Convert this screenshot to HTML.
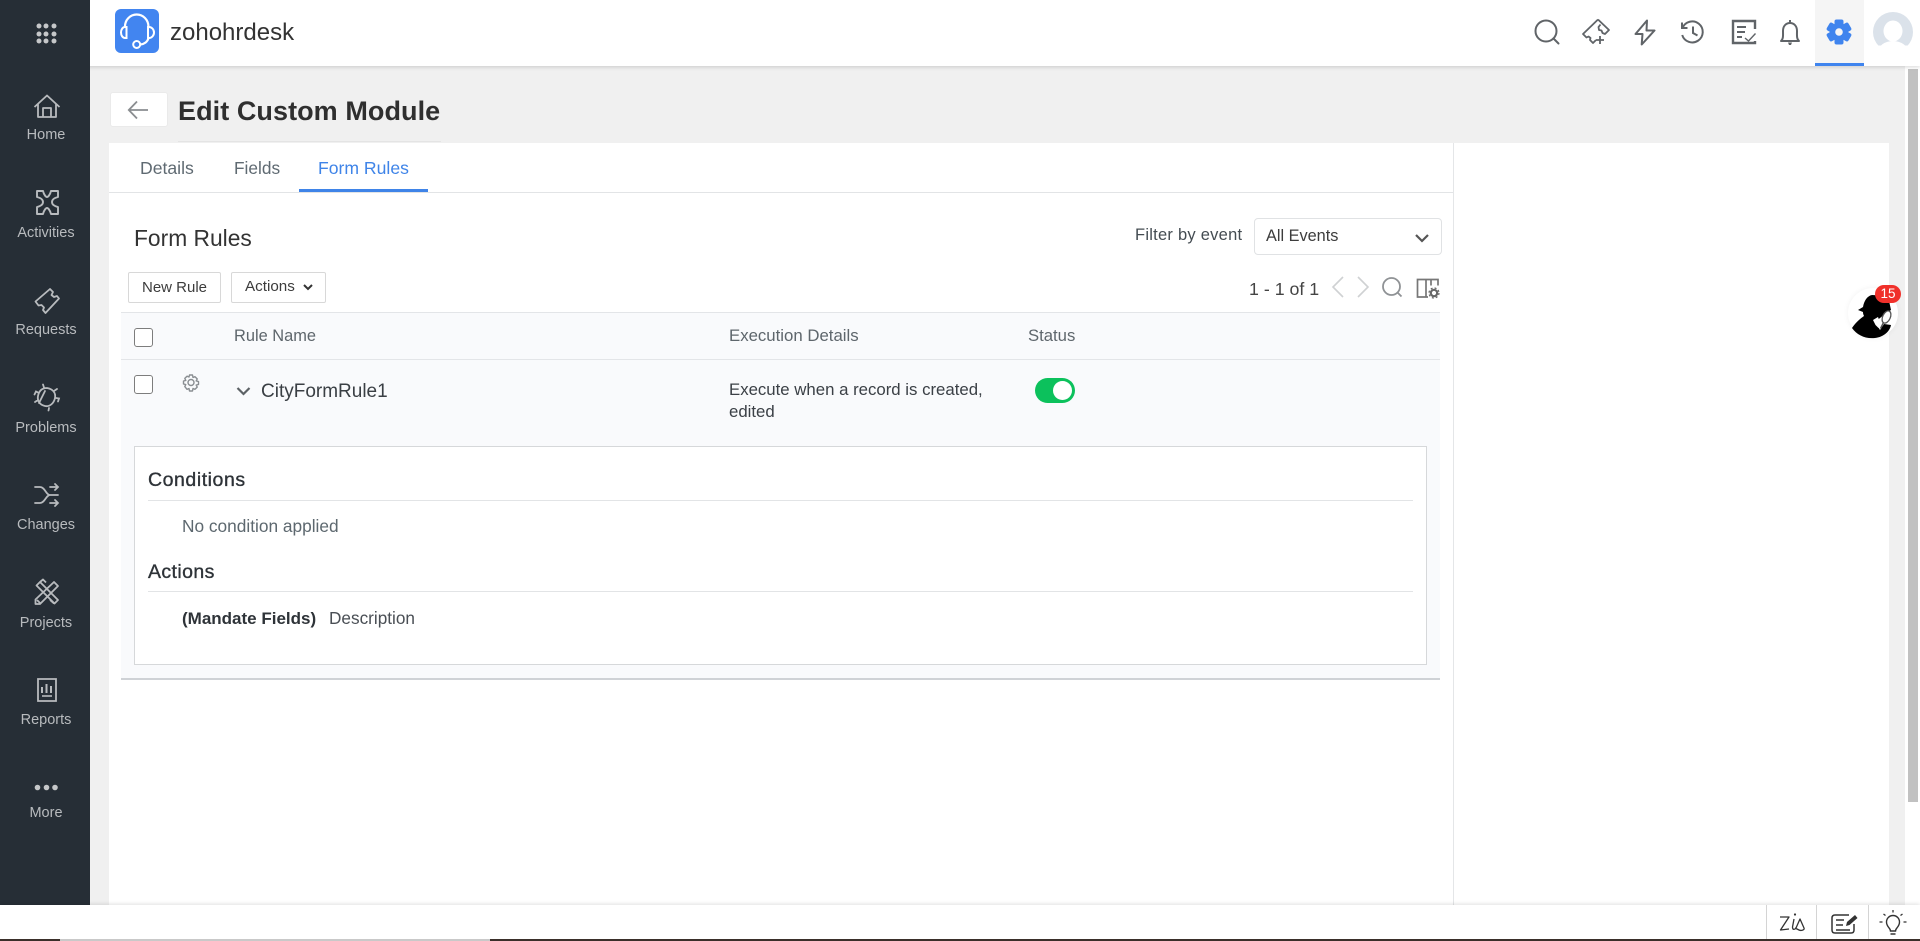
<!DOCTYPE html>
<html><head><meta charset="utf-8"><title>Edit Custom Module</title>
<style>
html,body{margin:0;padding:0;width:1920px;height:941px;overflow:hidden;background:#f0f0f0;font-family:"Liberation Sans",sans-serif;color:#333}
div,span,svg{position:absolute}
.t{white-space:nowrap;line-height:20px;height:20px}
.side{width:92px;left:0;text-align:center;color:#b8bbbe;font-size:14.5px;line-height:20px;height:20px}
svg{overflow:visible;fill:none}
.ic{stroke:#b8bbbe;stroke-width:1.6}
.top{stroke:#606468;stroke-width:2}
</style></head><body>

<!-- main white areas -->
<div style="left:109px;top:143px;width:1780px;height:762px;background:#fff"></div>
<div style="left:1453px;top:143px;width:1px;height:762px;background:#e4e6e8"></div>
<div style="left:109px;top:192px;width:1344px;height:1px;background:#e2e4e6"></div>
<div style="left:178px;top:141px;width:263px;height:1px;background:#e4e4e4"></div>

<!-- scrollbar -->
<div style="left:1905px;top:66px;width:15px;height:839px;background:#fff"></div>
<div style="left:1908px;top:69px;width:10px;height:733px;background:#c1c1c1"></div>

<!-- top bar -->
<div style="left:0;top:0;width:1920px;height:66px;background:#fff;box-shadow:0 1px 4px rgba(0,0,0,.16)"></div>
<div style="left:115px;top:9px;width:44px;height:44px;background:#4285f0;border-radius:6px"></div>
<svg style="left:115px;top:9px" width="44" height="44" viewBox="0 0 44 44">
<path d="M10 17.500a11.700 12 0 0 1 23.400 0" stroke="#fff" stroke-width="2.200"/>
<path d="M11.500 18h-1.500a4 5.500 0 0 0 0 11h1.500zM33 18h1a5 5.500 0 0 1 0 11h-1z" stroke="#fff" stroke-width="2"/>
<path d="M33.500 29c-1 4-4.500 6-8 6.500" stroke="#fff" stroke-width="2.200"/>
<circle cx="21.700" cy="35.500" r="3.500" stroke="#fff" stroke-width="2"/>
</svg>
<span class="t" style="left:170px;top:22px;font-size:24px;line-height:22px;color:#333">zohohrdesk</span>

<!-- top right icons -->
<svg style="left:0;top:0" width="1920" height="66">
<g class="top">
<circle cx="1546" cy="31" r="10.500"/><path d="M1553.500 38.500l5 5" stroke-linecap="round"/>
<path d="M1598 19.500l-15 14.500 3.500 3.500 2-1 2 1.500-.5 2 3 3 3-3M1598 19.500l11 10.500-4 4-2.500-1-1-2.500-2.500-.5-.5-3 2-2.500M1600 44v-8M1596 40h8" stroke-linejoin="round" stroke-width="1.800"/>
<path d="M1647 20.500l-11.500 13.500h7l-.8 10.500 12.800-14h-8z" stroke-linejoin="round"/>
<path d="M1682.500 28a10.500 10.500 0 1 1-.3 7M1682 22.500v5.500h5.500M1693 26.500v6.500l4.500 2.500"/>
<path d="M1755 29v-8h-22v22h22v-2" stroke-width="2.400"/><path d="M1737 27h9M1737 32h8M1737 37h5"/><path d="M1745 38l3.500 3 7-7.500" stroke-width="1.400"/>
<path d="M1781 41c2.500-2 2-6 2-10 0-5 3-8 7-8s7 3 7 8c0 4-.5 8 2 10zM1790 23v-3" stroke-linejoin="round"/>
</g>
<path d="M1788 42.500h4l-1 2.500h-2z" fill="#606468"/>
</svg>
<div style="left:1815px;top:0;width:49px;height:66px;background:#f5f5f5"></div>
<div style="left:1815px;top:63px;width:49px;height:3px;background:#3f84ee"></div>
<svg style="left:1839px;top:32px" width="1" height="1" viewBox="0 0 1 1">
<g fill="#3f84ee">
<rect x="-4.500" y="-12.500" width="9" height="25" rx="2"/>
<rect x="-4.500" y="-12.500" width="9" height="25" rx="2" transform="rotate(60)"/>
<rect x="-4.500" y="-12.500" width="9" height="25" rx="2" transform="rotate(120)"/>
<circle r="9"/>
</g>
<circle cx="0" cy="0" r="3.800" fill="#f5f5f5"/>
</svg>
<svg style="left:1873px;top:12px" width="40" height="40" viewBox="0 0 40 40">
<circle cx="20" cy="20" r="20" fill="#dbe2ea"/>
<ellipse cx="20" cy="19" rx="9.500" ry="10.500" fill="#fff"/>
<ellipse cx="20" cy="40" rx="15" ry="11" fill="#fff"/>
<rect x="-1" y="33.500" width="42" height="8" fill="#fff"/>
</svg>

<!-- sidebar -->
<div style="left:0;top:0;width:90px;height:905px;background:#262e36"></div>
<svg style="left:1px;top:0" width="90" height="905">
<g fill="#c5c7c9">
<circle cx="38" cy="26" r="2.500"/><circle cx="45" cy="26" r="2.500"/><circle cx="53" cy="26" r="2.500"/>
<circle cx="38" cy="34" r="2.500"/><circle cx="45" cy="34" r="2.500"/><circle cx="53" cy="34" r="2.500"/>
<circle cx="38" cy="41" r="2.500"/><circle cx="45" cy="41" r="2.500"/><circle cx="53" cy="41" r="2.500"/>
<circle cx="36.500" cy="787.500" r="2.800"/><circle cx="45.500" cy="787.500" r="2.800"/><circle cx="54" cy="787.500" r="2.800"/>
</g>
<g class="ic">
<path d="M33.500 107L46 95.500 58.500 107M37 103.500v13.500h18v-13.500M42 117v-9h8v9" stroke-linejoin="round" stroke-width="1.800"/>
<path d="M36 191h6c1 4 3 6 4 6s3-2 4-6h7v6c-4 1-6 3-6 5s2 4 6 5v7h-7c-1-4-3-6-4-6s-3 2-4 6h-6v-7c4-1 6-3 6-5s-2-4-6-5z" stroke-width="1.900" stroke-linejoin="round"/>
<path d="M34.500 301.500L49 289l3 3-1.500 3 2.500 2 3-1 2 2.500L44.500 313l-2.500-3 1-2.500-2.500-2.500-3 .5z" stroke-linejoin="round" stroke-width="1.800"/>
<path d="M46 388c6 1 9 5 8 10s-5 9-10 8-8-5-7-10 4-8 9-8zM43 387.500l-1-3M38 393l-3-1.500-1.500 3M53 391l3-2M55 398l3 .5-1 3M37 400l-3 2M48 408l-.5 2.500M38 403l6-12" stroke-linecap="round" stroke-width="1.800"/>
<path d="M34 487h5c5 0 6 8 10 8h8M34 503h5c5 0 6-8 10-8M49 487h8M54 484l3 3-3 3M49 503h8M54 500l3 3-3 3" stroke-linecap="round" stroke-width="1.800"/>
<path d="M39 582l18 18-3.500 3.500-18-18zM53 582l4 4-18 18H34.500v-4.500zM39 582l3-2.500 3 3M49 600l4 3.500M36 600l4 4" stroke-width="1.800" stroke-linejoin="round"/>
<path d="M31.500 680h18v22h-18z" transform="translate(5.500 -1)" stroke-width="1.800"/>
<path d="M41 693v-6M45.500 693v-9M50 693v-7" stroke-width="2"/><path d="M41 696h10" stroke-width="1.600"/>
</g>
</svg>
<div class="side" style="top:125px">Home</div>
<div class="side" style="top:223px">Activities</div>
<div class="side" style="top:320px">Requests</div>
<div class="side" style="top:418px">Problems</div>
<div class="side" style="top:515px">Changes</div>
<div class="side" style="top:613px">Projects</div>
<div class="side" style="top:710px">Reports</div>
<div class="side" style="top:803px">More</div>

<!-- header -->
<div style="left:110px;top:92px;width:58px;height:35px;background:#fff;border-radius:3px;border:1px solid #eaeaea;box-sizing:border-box"></div>
<svg style="left:126px;top:98px" width="24" height="24"><path d="M22 12H3M11 3.500L2.800 12l8.200 8.500" stroke="#8a8d90" stroke-width="1.800"/></svg>
<span class="t" style="left:178px;top:101px;font-size:27px;line-height:20px;font-weight:bold;color:#2f2f2f;letter-spacing:.07px">Edit Custom Module</span>

<!-- tabs -->
<span class="t" style="left:140px;top:158px;font-size:17.600px;color:#5f6a72">Details</span>
<span class="t" style="left:234px;top:158px;font-size:17.300px;color:#5f6a72">Fields</span>
<span class="t" style="left:318px;top:158px;font-size:17.600px;color:#3f84e8">Form Rules</span>
<div style="left:299px;top:189px;width:129px;height:3px;background:#3f84e8"></div>

<!-- form rules header -->
<span class="t" style="left:134px;top:228px;font-size:22.800px;color:#333">Form Rules</span>
<span class="t" style="left:1135px;top:225px;font-size:16.500px;letter-spacing:.25px;color:#444c52">Filter by event</span>
<div style="left:1254px;top:218px;width:188px;height:37px;border:1px solid #e0e2e4;border-radius:4px;box-sizing:border-box;background:#fff"></div>
<span class="t" style="left:1266px;top:226px;font-size:16.300px;color:#3d3d3d">All Events</span>
<svg style="left:1414px;top:232px" width="16" height="12"><path d="M2 3l6 6 6-6" stroke="#555" stroke-width="2.200"/></svg>

<div style="left:128px;top:272px;width:93px;height:31px;border:1px solid #d8d8d8;border-radius:2px;box-sizing:border-box;background:#fff"></div>
<span class="t" style="left:142px;top:278px;font-size:15px;color:#3c3c3c">New Rule</span>
<div style="left:231px;top:272px;width:95px;height:31px;border:1px solid #d8d8d8;border-radius:2px;box-sizing:border-box;background:#fff"></div>
<span class="t" style="left:245px;top:277px;font-size:15.200px;color:#3c3c3c">Actions</span>
<svg style="left:302px;top:283px" width="12" height="10"><path d="M2 2l4 4 4-4" stroke="#333" stroke-width="2"/></svg>

<span class="t" style="left:1249px;top:279px;font-size:17.800px;color:#444">1 - 1 of 1</span>
<svg style="left:0;top:0" width="1920" height="320">
<path d="M1343 277l-10 10 10 10M1358 277l10 10-10 10" stroke="#cfd1d3" stroke-width="1.600"/>
<circle cx="1391.500" cy="286.500" r="8.500" stroke="#8f9295" stroke-width="1.800"/><path d="M1397.500 292.500l4 4" stroke="#8f9295" stroke-width="1.800"/>
<path d="M1428 297h-10.500v-17.500h20.500v6M1426 279.500v17.500M1431 279.500v6" stroke="#777" stroke-width="1.700"/>
<circle cx="1434" cy="293" r="3.200" stroke="#666" stroke-width="2.200"/><circle cx="1434" cy="293" r="5" stroke="#666" stroke-width="1.200" stroke-dasharray="2 2"/>
</svg>

<!-- table -->
<div style="left:121px;top:312px;width:1319px;height:368px;background:#f9fafc"></div>
<div style="left:121px;top:312px;width:1319px;height:1px;background:#e3e5e8"></div>
<div style="left:121px;top:359px;width:1319px;height:1px;background:#e3e5e8"></div>
<div style="left:121px;top:678px;width:1319px;height:2px;background:#cfd2d6"></div>
<div style="left:134px;top:328px;width:19px;height:19px;border:1px solid #7d7d7d;border-radius:3px;box-sizing:border-box;background:#fff"></div>
<div style="left:134px;top:375px;width:19px;height:19px;border:1px solid #7d7d7d;border-radius:3px;box-sizing:border-box;background:#fff"></div>
<span class="t" style="left:234px;top:325.500px;font-size:16.400px;color:#5e666c">Rule Name</span>
<span class="t" style="left:729px;top:325.500px;font-size:16.800px;color:#5e666c">Execution Details</span>
<span class="t" style="left:1028px;top:325.500px;font-size:16.700px;color:#5e666c">Status</span>

<svg style="left:182px;top:374px" width="18" height="18" viewBox="0 0 18 18">
<path d="M7.500 1h3l.5 2.500 2-.8 2.200 2.200-1 2 2.300.6v3l-2.300.6 1 2-2.200 2.200-2-.8-.5 2.500h-3l-.5-2.500-2 .8L2.800 12.600l1-2L1.500 10V7l2.300-.6-1-2L5 2.200l2 .8z" stroke="#8a8e92" stroke-width="1.400" stroke-linejoin="round"/>
<circle cx="9" cy="8.500" r="3" stroke="#8a8e92" stroke-width="1.400"/>
</svg>
<svg style="left:236px;top:386px" width="15" height="11"><path d="M1.500 2l6 6 6-6" stroke="#5d6266" stroke-width="2.200"/></svg>
<span class="t" style="left:261px;top:382px;font-size:19px;color:#3a3f44">CityFormRule1</span>
<span class="t" style="left:729px;top:380px;font-size:16.800px;color:#3b4046">Execute when a record is created,</span>
<span class="t" style="left:729px;top:402px;font-size:16.800px;color:#3b4046">edited</span>
<div style="left:1035px;top:378px;width:40px;height:25px;background:#0cc15c;border-radius:13px"></div>
<div style="left:1053px;top:381px;width:19px;height:19px;background:#fff;border-radius:50%"></div>

<!-- details panel -->
<div style="left:134px;top:446px;width:1293px;height:219px;border:1px solid #d6d8da;box-sizing:border-box;background:#fff"></div>
<span class="t" style="left:148px;top:470px;font-size:19.500px;letter-spacing:.55px;color:#2e3338;-webkit-text-stroke:.35px #2e3338">Conditions</span>
<div style="left:148px;top:500px;width:1265px;height:1px;background:#e2e4e6"></div>
<span class="t" style="left:182px;top:516px;font-size:17.300px;color:#5d686f">No condition applied</span>
<span class="t" style="left:148px;top:561.500px;font-size:19.500px;letter-spacing:.4px;color:#2e3338;-webkit-text-stroke:.35px #2e3338">Actions</span>
<div style="left:148px;top:591px;width:1265px;height:1px;background:#e2e4e6"></div>
<span class="t" style="left:182px;top:608.500px;font-size:17px;font-weight:bold;color:#2e3338">(Mandate Fields)</span>
<span class="t" style="left:329px;top:608px;font-size:17.200px;color:#4a4f55">Description</span>

<!-- floating bot -->
<div style="left:1848px;top:288px;width:50px;height:50px;border-radius:50%;background:#fff;box-shadow:0 0 6px rgba(0,0,0,.06)"></div>
<svg style="left:1848px;top:288px" width="50" height="50" viewBox="0 0 50 50">
<path d="M4 40C8 34 12 31 16 28C15 26 15 25 15 24L10 22L15 19C16 13 19 8 24 7L40 8L43 22L37 26L32 30L27 34L32 42L36 36L43 37C42 43 36 49 27 50C17 51 9 47 4 40Z" fill="#000"/>
<path d="M25 32l5-3 3 8-2.500 3-3-3z" fill="#fff"/>
<ellipse cx="38.500" cy="29" rx="3.800" ry="6.500" transform="rotate(25 38.500 29)" stroke="#555" stroke-width="1.300" fill="#fff"/>
<path d="M35.500 34.500l-3 6" stroke="#555" stroke-width="1.400"/>
</svg>
<div style="left:1875px;top:285px;width:26px;height:18px;background:#f0302a;border-radius:9px;color:#fff;font-size:13.500px;line-height:18px;text-align:center">15</div>

<!-- bottom bar -->
<div style="left:0;top:905px;width:1920px;height:36px;background:#fff;box-shadow:0 -1px 4px rgba(0,0,0,.12)"></div>
<div style="left:1766px;top:905px;width:1px;height:34px;background:#d4d4d4"></div>
<div style="left:1816px;top:905px;width:1px;height:34px;background:#d4d4d4"></div>
<div style="left:1868px;top:905px;width:1px;height:34px;background:#d4d4d4"></div>
<svg style="left:0;top:0" width="1920" height="941">
<path d="M1780 917h9l-8.500 13 8.500-1M1794 919l-1.500 8c0 3 2 3 3.500 1l4-9 4 9c1 2-3 3-5 2l-4-2" stroke="#333" stroke-width="1.300" stroke-linejoin="round"/>
<circle cx="1795" cy="914.500" r="1.100" fill="#333"/>
<path d="M1849 915h-14c-2 0-3 1-3 3v12c0 2 1 3 3 3h16c2 0 3-1 3-3v-6" stroke="#333" stroke-width="1.500"/>
<path d="M1836 920h8M1836 925h7M1836 930h14" stroke="#333" stroke-width="1.500"/>
<path d="M1846 926l1-4 8-7 2.500 3-8 7z" fill="#333"/>
<path d="M1890.500 931c0-3-4-4-4-9a6.500 6.500 0 0 1 13 0c0 5-4 6-4 9zM1890.500 934h5" stroke="#333" stroke-width="1.400"/>
<path d="M1893 910v2.500M1883.500 914l2 1.500M1902.500 914l-2 1.500M1879.500 922h3M1903.500 922h3" stroke="#333" stroke-width="1.300"/>
</svg>
<div style="left:0;top:939px;width:1920px;height:2px;background:#3a2f2a"></div>
<div style="left:60px;top:939px;width:430px;height:2px;background:#c9c9c9"></div>
</body></html>
